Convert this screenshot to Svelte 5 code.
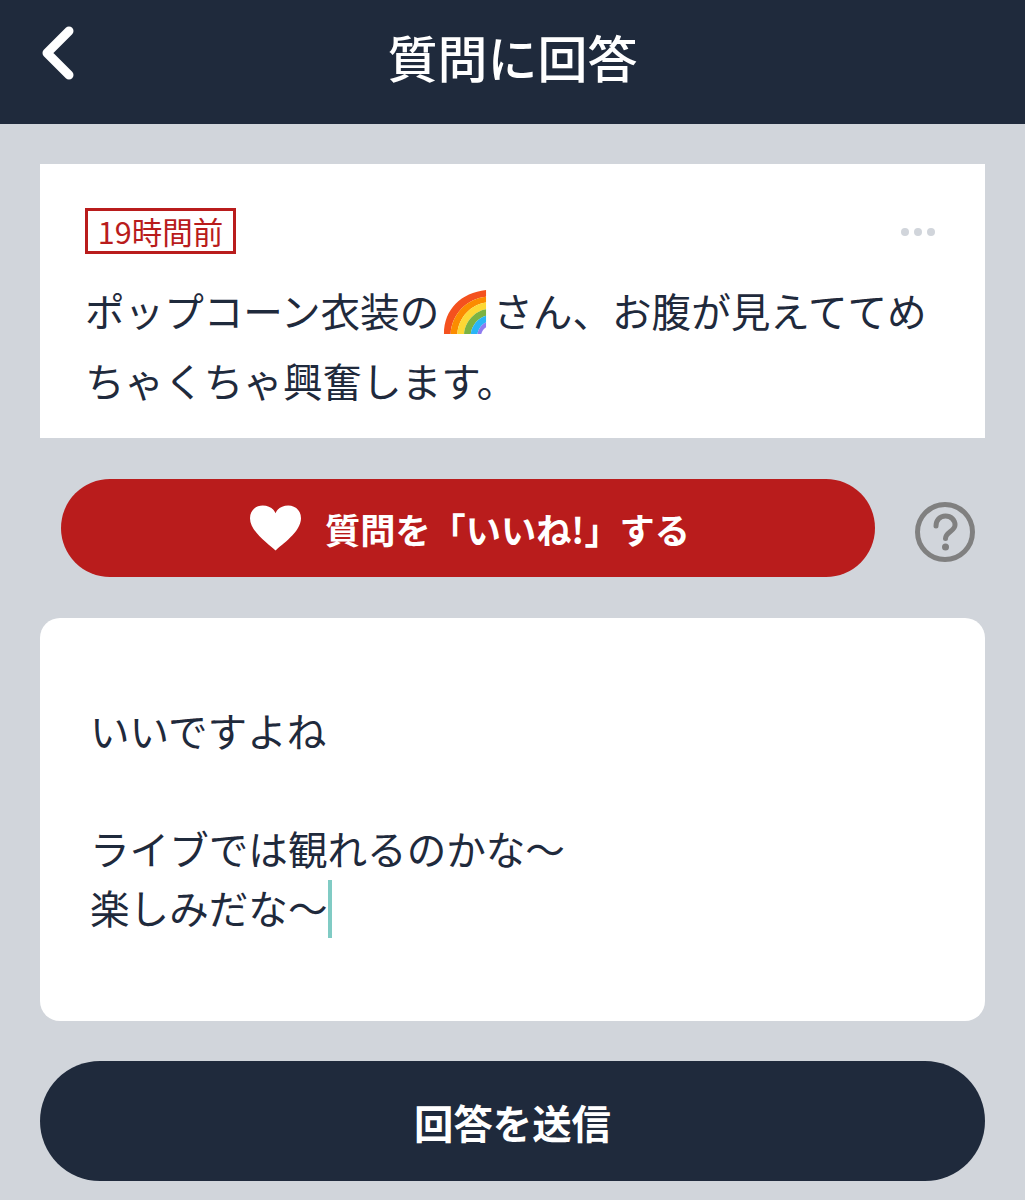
<script>
  const lines = ['いいですよね', '', 'ライブでは観れるのかな〜'];
</script>

<div class="page">
  <header class="topbar">
    <button class="back" aria-label="戻る">
      <svg width="36" height="54" viewBox="0 0 36 54">
        <path d="M30 5 L8 27 L30 49" fill="none" stroke="#fff" stroke-width="9" stroke-linecap="round" stroke-linejoin="round" />
      </svg>
    </button>
    <h1>質問に回答</h1>
  </header>

  <main class="content">
    <section class="question">
      <div class="meta">
        <span class="badge">19時間前</span>
        <span class="dots"><i></i><i></i><i></i></span>
      </div>
      <p>
        ポップコーン衣装の<svg class="rainbow" width="44" height="44" viewBox="0 0 44 46">
          <path d="M44 0 C18 3 0 20 0 46 H7 C8 25 24 9 44 7 Z" fill="#f4511e" />
          <path d="M44 7 C24 9 8 25 7 46 H14 C15 29 28 15 44 13 Z" fill="#fb8c00" />
          <path d="M44 13 C28 15 15 29 14 46 H21 C22 33 32 22 44 20 Z" fill="#fdd835" />
          <path d="M44 20 C32 22 22 33 21 46 H28 C29 37 36 29 44 27 Z" fill="#7cb342" />
          <path d="M44 27 C36 29 29 37 28 46 H35 C36 41 39 36 44 34 Z" fill="#29b6f6" />
          <path d="M44 34 C39 36 36 41 35 46 H39 C40 43 41 41 44 39 Z" fill="#8e7cf0" />
        </svg>さん、お腹が見えててめちゃくちゃ興奮します。
      </p>
    </section>

    <div class="like-row">
      <button class="like">
        <svg width="51" height="46" viewBox="0 0 52 46">
          <path d="M26 46 C20 40 0 27 0 13 C0 5 6 0 13 0 C19 0 24 3 26 8 C28 3 33 0 39 0 C46 0 52 5 52 13 C52 27 32 40 26 46 Z" fill="#fff" />
        </svg>
        <span>質問を「いいね!」する</span>
      </button>
      <svg class="help" width="60" height="60" viewBox="0 0 60 60">
        <circle cx="30" cy="30" r="27.5" fill="none" stroke="#808080" stroke-width="5" />
        <path d="M21 24 C21 18 25 14 30.500 14 C36 14 40 18 40 23 C40 29 30.500 30 30.500 36.500" fill="none" stroke="#808080" stroke-width="5" stroke-linecap="round" />
        <circle cx="30.500" cy="45" r="3.500" fill="#808080" />
      </svg>
    </div>

    <div class="answer">
      {#each lines as line}
        <div class="line">{line}</div>
      {/each}
      <div class="line">楽しみだな〜<span class="caret"></span></div>
    </div>

    <button class="send">回答を送信</button>
  </main>
</div>

<style>
  :global(body) {
    margin: 0;
    background: #d1d5db;
  }

  .page {
    height: 1200px;
    overflow: hidden;
    background: #d1d5db;
    color: #1f2a3c;
    font-family: "Noto Sans CJK JP", "Noto Sans", sans-serif;
  }

  button {
    font-family: inherit;
    border: none;
    padding: 0;
  }

  .topbar {
    position: relative;
    display: flex;
    align-items: center;
    justify-content: center;
    height: 124px;
    background: #1f2a3c;
  }

  .topbar h1 {
    margin: 0 0 12px;
    color: #fff;
    font-size: 50px;
    font-weight: 500;
    line-height: 1;
  }

  .back {
    position: absolute;
    left: 39px;
    top: 26px;
    display: flex;
    background: none;
  }

  .content {
    display: flex;
    flex-direction: column;
    padding: 40px 40px 0;
  }

  .question {
    height: 274px;
    box-sizing: border-box;
    padding: 44px 50px 0 45px;
    background: #fff;
  }

  .meta {
    display: flex;
    justify-content: space-between;
    align-items: center;
  }

  .badge {
    box-sizing: border-box;
    height: 46px;
    width: 151px;
    border: 3px solid #b91c1c;
    color: #b91c1c;
    font-size: 30.5px;
    line-height: 40px;
    text-align: center;
  }

  .dots {
    display: flex;
    gap: 5px;
    margin-top: 2px;
  }

  .dots i {
    width: 8px;
    height: 8px;
    border-radius: 50%;
    background: #d1d5db;
  }

  .question p {
    margin: 21px 0 0;
    font-size: 39.6px;
    line-height: 70px;
  }

  .rainbow {
    vertical-align: -7px;
    margin: 0 6px 0 4px;
  }

  .like-row {
    display: flex;
    align-items: center;
    margin-top: 41px;
    padding-left: 21px;
  }

  .like {
    display: flex;
    align-items: center;
    justify-content: center;
    gap: 24px;
    width: 814px;
    height: 98px;
    padding-left: 4px;
    border-radius: 49px;
    background: #b91c1c;
    color: #fff;
    font-size: 35.2px;
    font-weight: 700;
  }

  .help {
    margin-left: 40px;
    margin-top: 8px;
  }

  .answer {
    height: 403px;
    box-sizing: border-box;
    margin-top: 41px;
    padding: 82px 50px 0;
    background: #fff;
    border-radius: 20px;
    font-size: 39.6px;
    line-height: 59px;
  }

  .line {
    min-height: 59px;
  }

  .caret {
    display: inline-block;
    width: 4px;
    height: 58px;
    margin-left: 1px;
    vertical-align: -14px;
    background: #80cbc4;
  }

  .send {
    height: 120px;
    margin-top: 40px;
    border-radius: 60px;
    background: #1f2a3c;
    color: #fff;
    font-size: 39.4px;
    font-weight: 700;
  }
</style>
